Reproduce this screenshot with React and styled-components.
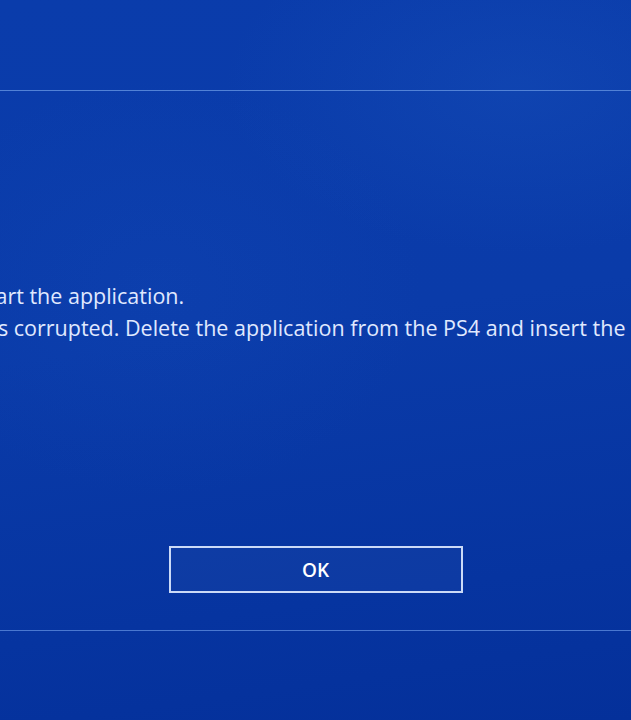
import React from 'react';
import styled, { createGlobalStyle } from 'styled-components';

const GlobalStyle = createGlobalStyle`
  html, body {
    margin: 0;
    padding: 0;
    height: 100%;
    overflow: hidden;
  }
  body {
    font-family: "Open Sans", "Noto Sans", sans-serif;
    background: #0838a6;
  }
`;

const Screen = styled.div`
  width: 631px;
  height: 720px;
  display: flex;
  justify-content: center;
  overflow: hidden;
  background:
    radial-gradient(ellipse 420px 240px at 82% 12%, rgba(40, 105, 205, 0.18), transparent 70%),
    radial-gradient(ellipse 380px 300px at 25% 40%, rgba(30, 90, 200, 0.12), transparent 70%),
    linear-gradient(172deg, #0a3cab 0%, #0a3ba9 45%, #0634a0 80%, #04309a 100%);
`;

// the full-width console screen; the window shows its middle part
const Frame = styled.div`
  flex: 0 0 1200px;
  padding-top: 90px;
`;

const Dialog = styled.div`
  height: 539px;
  border-top: 1px solid #5282d6;
  border-bottom: 1px solid #4a78d0;
  display: flex;
  flex-direction: column;
`;

const Message = styled.div`
  margin-top: 189px;
  padding-left: 184px;
  color: #e0e9ff;
  font-size: 21.5px;
  font-weight: 400;
  line-height: 32px;
  white-space: nowrap;
`;

const Line = styled.p`
  margin: 0;
`;

const Actions = styled.div`
  margin-top: auto;
  margin-bottom: 37px;
  display: flex;
  justify-content: center;
`;

const OkButton = styled.button`
  width: 294px;
  height: 47px;
  box-sizing: border-box;
  border: 2px solid #cbdaf7;
  background: rgba(255, 255, 255, 0.03);
  color: #ffffff;
  font-family: "Open Sans", "Noto Sans", sans-serif;
  font-size: 19px;
  font-weight: 600;
  cursor: pointer;
`;

export default function App() {
  return (
    <>
      <GlobalStyle />
      <Screen>
        <Frame>
          <Dialog>
            <Message>
              <Line>Cannot start the application.</Line>
              <Line>The data is corrupted. Delete the application from the PS4 and insert the disc again.</Line>
            </Message>
            <Actions>
              <OkButton>OK</OkButton>
            </Actions>
          </Dialog>
        </Frame>
      </Screen>
    </>
  );
}
